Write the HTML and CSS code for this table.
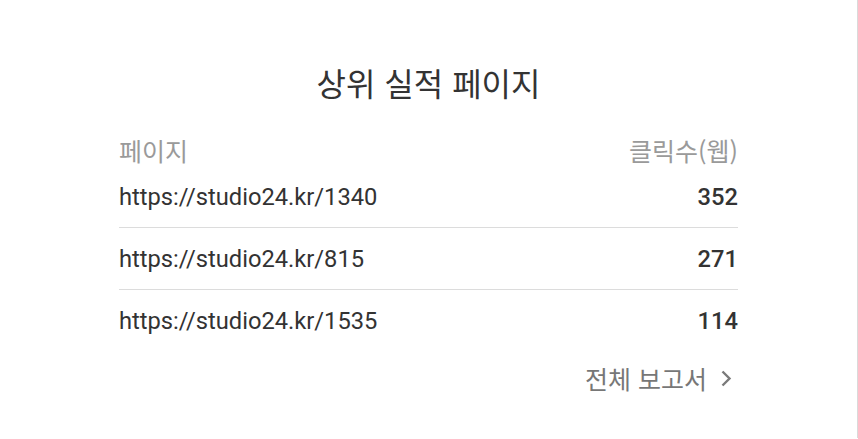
FILE: index.html
```html
<!DOCTYPE html>
<html lang="ko">
<head>
<meta charset="utf-8">
<link rel="stylesheet" href="styles.css">
</head>
<body>
<div class="card">
  <h2 class="title">상위 실적 페이지</h2>
  <div class="table">
    <div class="head">
      <span>페이지</span>
      <span>클릭수(웹)</span>
    </div>
    <div class="row">
      <span class="url">https://studio24.kr/1340</span>
      <span class="num">352</span>
    </div>
    <div class="row">
      <span class="url">https://studio24.kr/815</span>
      <span class="num">271</span>
    </div>
    <div class="row last">
      <span class="url">https://studio24.kr/1535</span>
      <span class="num">114</span>
    </div>
  </div>
  <div class="footer">
    <a class="more" href="#">전체 보고서
      <svg class="chev" width="12" height="19" viewBox="0 0 12 19"><path d="M2.5 2.5 L9.5 9.5 L2.5 16.5" fill="none" stroke="#7a7a7a" stroke-width="2.4"/></svg>
    </a>
  </div>
</div>
</body>
</html>
```
FILE: styles.css
```css
html, body {
  margin: 0;
  padding: 0;
  background: #fff;
}
.card {
  box-sizing: border-box;
  width: 858px;
  height: 438px;
  border-right: 1px solid #dadada;
  background: #fff;
  font-family: Roboto, "Noto Sans CJK KR", sans-serif;
  padding: 60px 119px 0 119px;
}
.title {
  margin: 0;
  text-align: center;
  font-family: "Noto Sans CJK KR", sans-serif;
  font-weight: 400;
  font-size: 32px;
  line-height: 44px;
  color: #333;
}
.table {
  margin-top: 31px;
}
.head {
  display: flex;
  justify-content: space-between;
  align-items: center;
  height: 30px;
  font-family: "Noto Sans CJK KR", sans-serif;
  font-size: 25px;
  color: #9a9a9a;
}
.row {
  display: flex;
  justify-content: space-between;
  align-items: center;
  height: 61px;
  border-bottom: 1px solid #dcdcdc;
  font-size: 23.7px;
  color: #333;
}
.row:nth-child(2) {
  height: 63px;
  padding-top: 2px;
  box-sizing: border-box;
}
.row.last { border-bottom: none; }
.url { font-weight: 400; }
.num { font-weight: 500; }
.footer {
  display: flex;
  justify-content: flex-end;
  margin-top: 12px;
}
.more {
  display: flex;
  align-items: center;
  height: 30px;
  gap: 13px;
  font-family: "Noto Sans CJK KR", sans-serif;
  font-size: 25px;
  color: #777;
  text-decoration: none;
  margin-right: 6px;
}
```
